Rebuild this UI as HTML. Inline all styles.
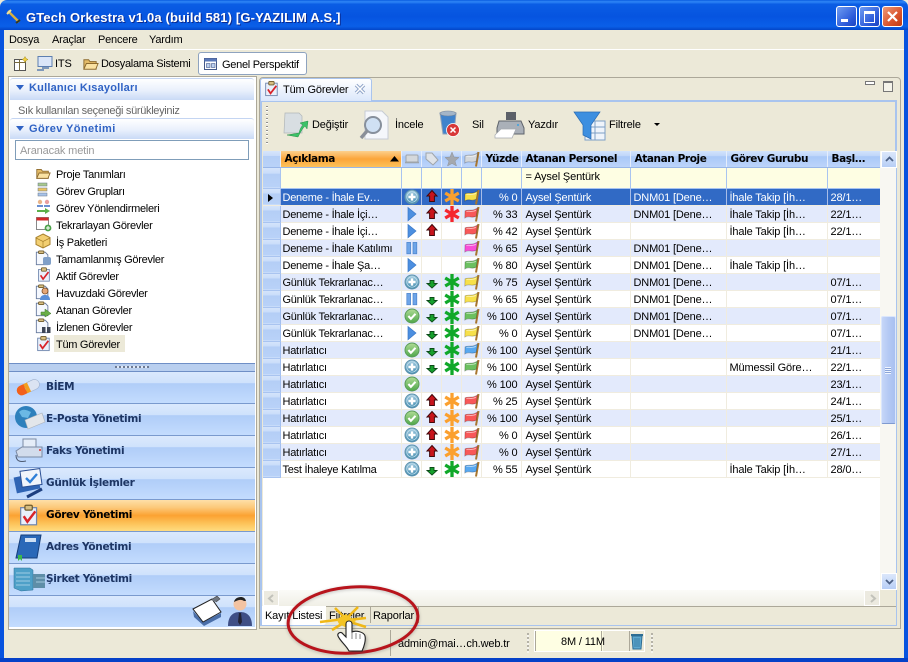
<!DOCTYPE html>
<html><head><meta charset="utf-8"><style>
html,body{margin:0;padding:0;width:908px;height:662px;overflow:hidden;background:#ece9d8}
body{position:relative;font:11px/13px "Liberation Sans","DejaVu Sans",sans-serif;color:#000;letter-spacing:-.15px}
.a,.t{position:absolute}
.t{white-space:nowrap}
.l{letter-spacing:-.28px;margin-top:1px}
svg{position:absolute;overflow:visible}
.h{background:linear-gradient(#fff,#e9f0fc 55%,#c9daf6);border-top:1px solid #c4d5f2;border-radius:3px 3px 0 0}
.hb{font:bold 11px/13px "Liberation Sans",sans-serif;color:#2f62c4;letter-spacing:.2px}
.btn{position:absolute;left:9px;width:246px;height:31px;border-bottom:1px solid #7a9ace;background:linear-gradient(#dbe9fd,#cfe2fc 35%,#b0cdf8 37%,#c3dcfe)}
.btn b{position:absolute;left:37px;top:8px;font:bold 10.5px/14px "DejaVu Sans",sans-serif;color:#1d3563;letter-spacing:-.3px}
table{position:absolute;left:263px;top:151px;width:617px;border-collapse:collapse;table-layout:fixed}
td{height:17px;box-sizing:border-box;padding:3px 0 0 3px;vertical-align:top;border-right:1px solid #f0ecdf;border-bottom:1px solid #f0ecdf;white-space:nowrap;overflow:hidden;position:relative;line-height:13px}
td:nth-child(2){padding-left:2px;letter-spacing:-.25px}
td:nth-child(8){padding-left:4px}
tr.e td{background:#e3eafc}
tr.o td{background:#fff}
td.r{background:linear-gradient(#d6e5fb,#c9dcfa 30%,#b4cef6 32%,#b9d2f8)!important;padding:0;border-right:1px solid #a3bfee;border-bottom:1px solid #a9c4f0}
td.n{text-align:right;padding-left:0;padding-right:3px}
td.i{padding:0}
td svg{left:2px;top:0}
tr.hd td{height:16px;padding:0 0 0 4px;vertical-align:middle;background:linear-gradient(#d2e3fc,#c0d6fa 30%,#a9c8f8 35%,#bcd4fa);border-right:1px solid #e4edfc;border-bottom:1px solid #98b6e8;font:bold 10.5px/14px "DejaVu Sans",sans-serif;letter-spacing:-.4px}
tr.hd td.i{padding:0}
tr.fl td{height:21px;padding-bottom:1px;padding-top:0;vertical-align:middle;background:#fefee3;border-right:1px solid #a9c4f0;border-bottom:1px solid #a9c4f0}
tr.s td{background:#316ac5;color:#fff;border-right:1px solid #a8bde8;border-bottom:1px solid #f0ecdf}
.mi{position:absolute;top:34px;letter-spacing:-.2px}
</style></head><body>
<svg width="0" height="0" style="position:absolute"><defs>
<linearGradient id="gp" x1="0" y1="0" x2="0" y2="1"><stop offset="0" stop-color="#a6cde2"/><stop offset="1" stop-color="#3f8aae"/></linearGradient>
<linearGradient id="gc" x1="0" y1="0" x2="0" y2="1"><stop offset="0" stop-color="#b0dc96"/><stop offset="1" stop-color="#4da64a"/></linearGradient>
<filter id="bl" x="-30%" y="-30%" width="160%" height="160%"><feGaussianBlur stdDeviation="1.5"/></filter>
<symbol id="p" viewBox="0 0 16 16"><circle cx="8" cy="8" r="7" fill="url(#gp)" stroke="#5f93ad"/><circle cx="8" cy="8" r="5.200" fill="none" stroke="#c8e2ee" stroke-width=".7"/><path d="M8 4.400v7.200M4.400 8h7.200" stroke="#fff" stroke-width="2.400"/></symbol>
<symbol id="c" viewBox="0 0 16 16"><circle cx="8" cy="8" r="7" fill="url(#gc)" stroke="#5a9c58"/><path d="M4.400 8l2.500 2.800 4.600-5" fill="none" stroke="#fff" stroke-width="2.100"/></symbol>
<symbol id="g" viewBox="0 0 16 16"><path d="M4 1.500l8 6.500-8 6.800z" fill="#4c8fe0" stroke="#3b78c6" stroke-width=".7"/></symbol>
<symbol id="z" viewBox="0 0 16 16"><rect x="2.800" y="2.400" width="3.800" height="11.400" fill="#6ea5e8" stroke="#4d84cc" stroke-width=".7"/><rect x="9" y="2.400" width="3.800" height="11.400" fill="#6ea5e8" stroke="#4d84cc" stroke-width=".7"/></symbol>
<symbol id="u" viewBox="0 0 16 16"><path d="M8 1.500l5 5.500H10.400v5.500H5.600V7H3z" fill="#c8141c" stroke="#42080a"/></symbol>
<symbol id="d" viewBox="0 0 16 16"><path d="M6 6.500h4v3h3L8 14 3 9.500h3z" fill="#16a02c" stroke="#0c4a18" stroke-width=".9"/></symbol>
<symbol id="so" viewBox="0 0 16 16"><path d="M8 0v16M1.200 4l13.600 8M14.800 4L1.200 12" stroke="#fba02e" stroke-width="3.300"/></symbol>
<symbol id="sr" viewBox="0 0 16 16"><path d="M8 0v16M1.200 4l13.600 8M14.800 4L1.200 12" stroke="#f5262c" stroke-width="3.300"/></symbol>
<symbol id="sg" viewBox="0 0 16 16"><path d="M8 0v16M1.200 4l13.600 8M14.800 4L1.200 12" stroke="#10a828" stroke-width="3.300"/></symbol>
<symbol id="f" viewBox="0 0 16 16"><path d="M14.500 1L12 15.500" stroke="#a8762e" stroke-width="2"/><path d="M1 5C4 2.800 8 6 13.500 2L12.300 10C8 13 5 9 .8 12z" fill="currentColor" stroke="#0004" stroke-width=".8"/><path d="M2.500 5.500C5 4.500 8 7 12 4.200" fill="none" stroke="#fff8" stroke-width="1"/></symbol>
<symbol id="clip" viewBox="0 0 18 18"><rect x="3" y="3" width="13" height="14" fill="#e9f0fb" stroke="#6f86ad"/><rect x="6.500" y="1" width="6" height="4" rx="1" fill="#d8bf82" stroke="#6e5a2c"/><path d="M5.500 10l3 4.500L15 6" fill="none" stroke="#d8242a" stroke-width="2"/></symbol>
<symbol id="doc" viewBox="0 0 18 18"><path d="M1.500 2.500h10l3 3v11h-13z" fill="#f5f8fe" stroke="#65789c"/><rect x="4" y="1" width="6" height="3" rx="1" fill="#d8bf82" stroke="#6e5a2c"/></symbol>
<symbol id="folder" viewBox="0 0 18 18"><path d="M2 15V5h5l1.500 2H15v8z" fill="#e3bb68" stroke="#8d6a2d"/><path d="M2 15l2.600-6H17l-2.400 6z" fill="#fae2a3" stroke="#8d6a2d"/></symbol>
</defs></svg>

<!-- window frame -->
<div class="a" style="left:0;top:0;width:908px;height:30px;background:linear-gradient(#0a5ce0 0,#2f86f6 6%,#0a5de4 14%,#0654e0 55%,#0a5fe8 88%,#0345c8);border-radius:7px 7px 0 0"></div>
<div class="a" style="left:0;top:30px;width:4px;height:632px;background:#0753df"></div>
<div class="a" style="right:0;top:30px;width:4px;height:632px;background:#0753df"></div>
<div class="a" style="left:0;top:658px;width:908px;height:4px;background:#0541c8"></div>
<svg style="left:5px;top:8px" width="18" height="18"><path d="M3 3l11 11" stroke="#d8b040" stroke-width="2.400"/><path d="M2 6l4-4" stroke="#f3e39c" stroke-width="2"/><path d="M11 15l4-3" stroke="#3a3a20" stroke-width="2"/></svg>
<div class="t" style="left:26px;top:10px;font:bold 13px/15px 'Liberation Sans',sans-serif;color:#fff;letter-spacing:.15px;text-shadow:1px 1px 0 #0a2a90">GTech Orkestra v1.0a (build 581) [G-YAZILIM A.S.]</div>
<div class="a" style="left:836px;top:6px;width:19px;height:19px;border:1px solid #fff;border-radius:3px;background:linear-gradient(135deg,#6f9cf2,#2a58d8 70%,#1c44c0)"><div class="a" style="left:4px;top:12px;width:7px;height:3px;background:#fff"></div></div>
<div class="a" style="left:859px;top:6px;width:19px;height:19px;border:1px solid #fff;border-radius:3px;background:linear-gradient(135deg,#6f9cf2,#2a58d8 70%,#1c44c0)"><div class="a" style="left:4px;top:4px;width:9px;height:8px;border:1px solid #fff;border-top-width:3px"></div></div>
<div class="a" style="left:882px;top:6px;width:19px;height:19px;border:1px solid #fff;border-radius:3px;background:linear-gradient(135deg,#ee9a78,#d9532c 60%,#bf3a14)"><svg style="left:3px;top:3px" width="13" height="13"><path d="M2 2l9 9M11 2l-9 9" stroke="#fff" stroke-width="2.200"/></svg></div>

<!-- menu -->
<div class="t mi" style="left:9px">Dosya</div><div class="t mi" style="left:52px">Araçlar</div><div class="t mi" style="left:98px">Pencere</div><div class="t mi" style="left:149px">Yardım</div>
<div class="a" style="left:4px;top:49px;width:900px;height:1px;background:#fff"></div>

<!-- toolbar -->
<svg style="left:13px;top:56px" width="16" height="16"><rect x="1.500" y="3.500" width="11" height="11" fill="#fff" stroke="#555"/><path d="M1.500 6.500h11M6.500 3.500v11" stroke="#7a6a3a"/><path d="M12 .5l1 2 2 1-2 1-1 2-1-2-2-1 2-1z" fill="#f3d23c" stroke="#a58a1c" stroke-width=".5"/></svg>
<svg style="left:36px;top:55px" width="17" height="17"><rect x="2" y="1.500" width="14" height="10" fill="#dbe6f8" stroke="#5d7fb0"/><path d="M6 13h7M1 15h7" stroke="#5d7fb0" stroke-width="1.600"/></svg>
<div class="t" style="left:55px;top:58px">ITS</div>
<svg style="left:82px;top:55px" width="17" height="17"><use href="#folder"/></svg>
<div class="t l" style="left:101px;top:57px">Dosyalama Sistemi</div>
<div class="a" style="left:198px;top:52px;width:107px;height:21px;border:1px solid #8ea3bf;border-radius:3px;background:#fff"></div>
<svg style="left:204px;top:57px" width="14" height="14"><rect x=".5" y="1.500" width="12" height="11" fill="#fff" stroke="#44598a"/><rect x=".5" y="1.500" width="12" height="3" fill="#5a78b8"/><rect x="2.500" y="6.500" width="3.500" height="4" fill="#bcd0ef" stroke="#44598a" stroke-width=".6"/><rect x="7.500" y="6.500" width="3.500" height="4" fill="#bcd0ef" stroke="#44598a" stroke-width=".6"/></svg>
<div class="t l" style="left:222px;top:58px">Genel Perspektif</div>

<!-- left panel -->
<div class="a" style="left:8px;top:76px;width:247px;height:552px;border:1px solid #aca899;background:#fff"></div>
<div class="a h" style="left:10px;top:78px;width:244px;height:21px"></div>
<svg style="left:15px;top:84px" width="11" height="8"><path d="M1 1h8L5 6z" fill="#2f62c4"/></svg>
<div class="t hb" style="left:29px;top:82px">Kullanıcı Kısayolları</div>
<div class="t l" style="left:18px;top:104px;color:#666;letter-spacing:-.32px">Sık kullanılan seçeneği sürükleyiniz</div>
<div class="a h" style="left:10px;top:118px;width:244px;height:20px"></div>
<svg style="left:15px;top:125px" width="11" height="8"><path d="M1 1h8L5 6z" fill="#2f62c4"/></svg>
<div class="t hb" style="left:29px;top:123px;letter-spacing:.4px">Görev Yönetimi</div>
<div class="a" style="left:15px;top:140px;width:232px;height:18px;border:1px solid #7f9db9;background:#fff"></div>
<div class="t" style="left:20px;top:145px;color:#999">Aranacak metin</div>

<svg style="left:35px;top:165px" width="16" height="16"><use href="#folder"/></svg>
<div class="t l" style="left:56px;top:168px">Proje Tanımları</div>
<svg style="left:38px;top:183px" width="12" height="15"><rect x="0" y="0" width="9" height="3" fill="#a8c88c" stroke="#678"  stroke-width=".5"/><rect x="0" y="5" width="9" height="3" fill="#ecc460" stroke="#678" stroke-width=".5"/><rect x="0" y="10" width="9" height="3" fill="#a9c4ea" stroke="#678" stroke-width=".5"/></svg>
<div class="t l" style="left:56px;top:185px">Görev Grupları</div>
<svg style="left:36px;top:199px" width="16" height="16"><circle cx="4" cy="3" r="2.200" fill="#e9b58a"/><circle cx="11" cy="3" r="2.200" fill="#e9a0a0"/><path d="M1 8h6V6H1zM8 8h6V6H8z" fill="#6a8fd0"/><path d="M1 11h8V9l5 3-5 3v-2H1z" fill="#5cb04a"/></svg>
<div class="t l" style="left:56px;top:202px">Görev Yönlendirmeleri</div>
<svg style="left:36px;top:216px" width="16" height="16"><rect x=".5" y="1.500" width="12" height="12" fill="#fff" stroke="#888"/><rect x=".5" y="1.500" width="12" height="3" fill="#d02828"/><circle cx="12" cy="12" r="3.400" fill="#4ca24a"/><path d="M12 10v4M10 12h4" stroke="#fff"/></svg>
<div class="t l" style="left:56px;top:219px">Tekrarlayan Görevler</div>
<svg style="left:35px;top:233px" width="16" height="16"><path d="M8 1l7 3.500v7L8 15 1 11.500v-7z" fill="#f2cf72" stroke="#a8812c"/><path d="M1 5l7 3.500L15 5M8 8.500V15" fill="none" stroke="#a8812c" stroke-width=".7"/></svg>
<div class="t l" style="left:56px;top:236px">İş Paketleri</div>
<svg style="left:35px;top:250px" width="16" height="16"><use href="#doc"/><rect x="8" y="7" width="8" height="8" rx="2" fill="#7f9fc8"/></svg>
<div class="t l" style="left:56px;top:253px">Tamamlanmış Görevler</div>
<svg style="left:36px;top:267px" width="15" height="15"><use href="#clip"/></svg>
<div class="t l" style="left:56px;top:270px">Aktif Görevler</div>
<svg style="left:35px;top:284px" width="16" height="16"><use href="#doc"/><circle cx="10" cy="7" r="3" fill="#e6a878" stroke="#7a4a20" stroke-width=".8"/><path d="M5 16c0-4 2.500-5 5-5s5 1 5 5z" fill="#5a8fd8"/></svg>
<div class="t l" style="left:56px;top:287px">Havuzdaki Görevler</div>
<svg style="left:35px;top:301px" width="16" height="16"><use href="#doc"/><path d="M6 11h4V8l6 4.500L10 16v-2H6z" fill="#6aae48" stroke="#3f7a2a" stroke-width=".5"/></svg>
<div class="t l" style="left:56px;top:304px">Atanan Görevler</div>
<svg style="left:35px;top:318px" width="16" height="16"><use href="#doc"/><rect x="7" y="9" width="3.500" height="6" fill="#3e4656"/><rect x="12" y="9" width="3.500" height="6" fill="#3e4656"/></svg>
<div class="t l" style="left:56px;top:321px">İzlenen Görevler</div>
<div class="a" style="left:54px;top:335px;width:71px;height:17px;background:#ece9d8"></div>
<svg style="left:35px;top:335px" width="16" height="17"><use href="#clip"/></svg>
<div class="t l" style="left:56px;top:338px">Tüm Görevler</div>

<div class="a" style="left:9px;top:363px;width:246px;height:9px;background:#b9cfef;border-top:1px solid #6f8fc6;border-bottom:1px solid #6f8fc6;box-sizing:border-box"></div>
<div class="a" style="left:115px;top:366px;width:34px;height:2px;background:repeating-linear-gradient(90deg,#6c7a94 0 2px,#dfe8f6 2px 4px)"></div>

<div class="btn" style="top:372px"><b>BİEM</b></div>
<svg style="left:15px;top:376px" width="28" height="22"><g transform="rotate(-25 14 11)"><rect x="1" y="6" width="13" height="10" rx="5" fill="#f2601a"/><rect x="10" y="6" width="15" height="10" rx="5" fill="#dbe3f2" stroke="#9fb0cc" stroke-width=".6"/><rect x="10" y="6" width="4" height="10" fill="#f2a020"/></g></svg>
<div class="btn" style="top:404px"><b>E-Posta Yönetimi</b></div>
<svg style="left:13px;top:404px" width="32" height="30"><circle cx="13" cy="13" r="11" fill="#2e80bc"/><path d="M6 8c4-4 8-2 12 0l-3 6-6-1z" fill="#6bb8e4"/><path d="M12 16l17-7 3 9-17 7z" fill="#e3e6ea" stroke="#aab0b8" stroke-width=".6"/></svg>
<div class="btn" style="top:436px"><b>Faks Yönetimi</b></div>
<svg style="left:14px;top:438px" width="30" height="26"><rect x="9" y="1" width="13" height="8" fill="#e5edf8" stroke="#7b8aa4"/><path d="M2 13l6-4h20v10H4z" fill="#d2dcec" stroke="#7b8aa4"/><path d="M2 17c0 7 5 7 10 6" fill="none" stroke="#4d5a70"/><circle cx="26" cy="12" r="1" fill="#d33"/></svg>
<div class="btn" style="top:468px"><b>Günlük İşlemler</b></div>
<svg style="left:14px;top:467px" width="30" height="32"><rect x="1" y="8" width="24" height="16" fill="#2f64b4" transform="rotate(-12 13 16)"/><rect x="7" y="3" width="20" height="16" fill="#f0f4fb" stroke="#2a4f94" transform="rotate(-8 16 11)"/><path d="M12 11l4 4 7-8" fill="none" stroke="#2f7fd8" stroke-width="2.400"/><path d="M13 30l15-8" stroke="#1d3f80" stroke-width="3"/></svg>
<div class="a" style="left:9px;top:500px;width:246px;height:31px;border-bottom:1px solid #7a9ace;background:linear-gradient(#fedfa8,#fcc878 25%,#fba232 50%,#fdc258 75%,#ffdc80)"></div>
<b class="t" style="left:46px;top:508px;font:bold 10.5px/14px 'DejaVu Sans',sans-serif;letter-spacing:-.3px">Görev Yönetimi</b>
<svg style="left:17px;top:504px" width="22" height="22"><use href="#clip"/></svg>
<div class="btn" style="top:532px"><b>Adres Yönetimi</b></div>
<svg style="left:14px;top:533px" width="30" height="28"><path d="M7 2h20l-4 23H2z" fill="#2a68b8" stroke="#163e7a"/><rect x="11" y="5" width="11" height="4" fill="#cfe0f4"/><path d="M4 22v6l2-2 2 2v-6z" fill="#3cb84a"/></svg>
<div class="btn" style="top:564px"><b>Şirket Yönetimi</b></div>
<svg style="left:13px;top:566px" width="32" height="26"><path d="M1 2h16l3 2v20L8 25 1 22z" fill="#4ea0c8" stroke="#2c7098" stroke-width=".5"/><path d="M20 8h12v14H20z" fill="#5e8ea8"/><path d="M3 7h14M3 11h14M3 15h14M3 19h14M23 12h9M23 16h9" stroke="#b8dcec" stroke-width=".8"/></svg>
<div class="btn" style="top:596px;border-bottom:0"></div>
<svg style="left:192px;top:594px" width="30" height="34"><path d="M1 17l10 11 18-9v4L12 32 2 23z" fill="#4a6ea8"/><path d="M1 15L20 5l9 13-18 10z" fill="#fff" stroke="#222"/><path d="M19 6l6-4 3 3-4 3" fill="#6f7680" stroke="#444" stroke-width=".6"/></svg>
<svg style="left:227px;top:595px" width="26" height="32"><circle cx="13" cy="9" r="6.500" fill="#f3c3a2"/><path d="M7 7c1-6 11-7 12-1l-2 0c-3-2-6-1-10 1z" fill="#222"/><path d="M1 31c0-10 5-14 12-14s12 4 12 14z" fill="#3f4f86"/><path d="M12 18h2l1 9-2 3-2-3z" fill="#223"/></svg>

<!-- right panel -->
<div class="a" style="left:259px;top:77px;width:640px;height:550px;border:1px solid #aca899;border-radius:4px 4px 0 0"></div>
<div class="a" style="left:260px;top:100px;width:637px;height:526px;border:2px solid #a9c4ee;box-sizing:border-box;background:#ece9d8"></div>
<div class="a" style="left:260px;top:78px;width:112px;height:23px;background:linear-gradient(#fff,#dbe7fb);border:1px solid #a9c4ee;border-bottom:0;border-radius:3px 3px 0 0;box-sizing:border-box"></div>
<svg style="left:263px;top:80px" width="16" height="17"><use href="#clip"/></svg>
<div class="t" style="left:283px;top:84px">Tüm Görevler</div>
<svg style="left:354px;top:83px" width="12" height="12"><path d="M2 2l8 8M10 2l-8 8" stroke="#8fa4c8" stroke-width="3.400"/><path d="M2 2l8 8M10 2l-8 8" stroke="#fff" stroke-width="1.500"/></svg>
<div class="a" style="left:865px;top:81px;width:8px;height:2px;border:1px solid #777;background:#fff"></div>
<div class="a" style="left:883px;top:81px;width:8px;height:8px;border:1px solid #777;border-top-width:2px;background:#f5f4ea"></div>

<!-- content toolbar -->
<div class="a" style="left:266px;top:106px;width:2px;height:38px;background:repeating-linear-gradient(#8f8f8f 0 1px,#fff 1px 2px,#ece9d8 2px 4px)"></div>
<svg style="left:283px;top:110px" width="26" height="30"><path d="M2 3h14l3 3v17H1z" fill="#d8dee2" stroke="#b0b6b8" stroke-width=".7"/><path d="M4 25l12-2c1-4 2-6 4-8l-3-2 8-2-1 8-2-3c-3 3-5 7-7 11z" fill="#3cc268" stroke="#2a9048" stroke-width=".5"/></svg>
<div class="t" style="left:312px;top:119px">Değiştir</div>
<svg style="left:360px;top:110px" width="30" height="32"><path d="M5 1h17l6 6v22H5z" fill="#f5f7fb" stroke="#c6cbd4"/><circle cx="13" cy="15" r="8" fill="#cfe0f3" stroke="#87909c" stroke-width="2"/><path d="M7 21l-6 7" stroke="#8a8f98" stroke-width="3.400"/></svg>
<div class="t" style="left:395px;top:119px">İncele</div>
<svg style="left:439px;top:110px" width="24" height="28"><path d="M1 3h16l-2 21H4z" fill="#3f83cc" stroke="#8ea2ba"/><ellipse cx="9" cy="3.500" rx="8" ry="2.500" fill="#a3b5c8" stroke="#75869a" stroke-width=".6"/><circle cx="14" cy="20" r="6.500" fill="#d83838" stroke="#fff" stroke-width=".8"/><path d="M11.500 17.500l5 5M16.500 17.500l-5 5" stroke="#fff" stroke-width="1.500"/></svg>
<div class="t" style="left:472px;top:119px">Sil</div>
<svg style="left:494px;top:111px" width="32" height="28"><path d="M12 1h10v8H12z" fill="#5c6068"/><path d="M5 10h22l3 7v6H3v-6z" fill="#aab0b8" stroke="#5e636b"/><path d="M7 18l-6 6v3h17l4-9z" fill="#fff" stroke="#a4a8ae" stroke-width=".7"/><circle cx="24" cy="14" r="1" fill="#3ba0e0"/></svg>
<div class="t" style="left:528px;top:119px">Yazdır</div>
<svg style="left:573px;top:110px" width="34" height="31"><rect x="12" y="11" width="20" height="19" fill="#eff4fb" stroke="#7d9fc6"/><path d="M12 17h20M12 23h20M22 11v19" stroke="#7d9fc6"/><path d="M1 2h26l-9 13v14l-8-4V15z" fill="#3d8fe0" stroke="#2a6cb4" stroke-width=".7"/></svg>
<div class="t" style="left:609px;top:119px">Filtrele</div>
<svg style="left:653px;top:122px" width="8" height="5"><path d="M1 1h6L4 4z" fill="#000"/></svg>

<!-- grid -->
<div class="a" style="left:263px;top:151px;width:633px;height:440px;background:#fff"></div>
<table>
<colgroup><col style="width:17px"><col style="width:121px"><col style="width:20px"><col style="width:20px"><col style="width:20px"><col style="width:20px"><col style="width:40px"><col style="width:109px"><col style="width:96px"><col style="width:101px"><col style="width:53px"></colgroup>
<tr class="hd"><td class="r"></td><td style="background:linear-gradient(#fdd08c,#fba53a 50%,#fdc25a);border-right-color:#e4edfc">Açıklama<svg style="left:109px;top:5px" width="9" height="6"><path d="M0 5.500L4.500 0 9 5.500z" fill="#000"/></svg></td>
<td class="i"><svg width="16" height="16" style="top:0;left:2px"><rect x="2" y="4" width="12" height="7" rx="1" fill="#d4d8dc" stroke="#9ea4aa"/><path d="M1 11.500h14" stroke="#9ea4aa" stroke-width="1.600"/></svg></td>
<td class="i"><svg width="16" height="16"><path d="M2 2h6l6 7-5 5-7-6z" fill="#dfe3e8" stroke="#9ea4aa"/></svg></td>
<td class="i"><svg width="16" height="16"><path d="M8 1l2 5 5 .5-4 3.500 1.500 5L8 12.500 3.500 15 5 10 1 6.500 6 6z" fill="#a4a8ae" stroke="#8e9298" stroke-width=".5"/></svg></td>
<td class="i"><svg width="16" height="16" style="color:#d4d8dc"><use href="#f"/></svg></td>
<td>Yüzde</td><td>Atanan Personel</td><td>Atanan Proje</td><td>Görev Gurubu</td><td>Başl…</td></tr>
<tr class="fl"><td class="r"></td><td></td><td></td><td></td><td></td><td></td><td></td><td>= Aysel Şentürk</td><td></td><td></td><td></td></tr>
<tr class="s"><td class="r"><svg width="6" height="8" style="left:5px;top:5px"><path d="M0 0l5 4-5 4z" fill="#000"/></svg></td><td>Deneme - İhale Ev…</td><td class="i"><svg width="16" height="16"><use href="#p"/></svg></td><td class="i"><svg width="16" height="16"><use href="#u"/></svg></td><td class="i"><svg width="16" height="16"><use href="#so"/></svg></td><td class="i"><svg width="16" height="16" style="color:#f7e04a"><use href="#f"/></svg></td><td class="n">% 0</td><td>Aysel Şentürk</td><td>DNM01 [Dene…</td><td>İhale Takip [İh…</td><td>28/1…</td></tr>
<tr class="e"><td class="r"></td><td>Deneme - İhale İçi…</td><td class="i"><svg width="16" height="16"><use href="#g"/></svg></td><td class="i"><svg width="16" height="16"><use href="#u"/></svg></td><td class="i"><svg width="16" height="16"><use href="#sr"/></svg></td><td class="i"><svg width="16" height="16" style="color:#f85858"><use href="#f"/></svg></td><td class="n">% 33</td><td>Aysel Şentürk</td><td>DNM01 [Dene…</td><td>İhale Takip [İh…</td><td>22/1…</td></tr>
<tr class="o"><td class="r"></td><td>Deneme - İhale İçi…</td><td class="i"><svg width="16" height="16"><use href="#g"/></svg></td><td class="i"><svg width="16" height="16"><use href="#u"/></svg></td><td></td><td class="i"><svg width="16" height="16" style="color:#f85858"><use href="#f"/></svg></td><td class="n">% 42</td><td>Aysel Şentürk</td><td></td><td>İhale Takip [İh…</td><td>22/1…</td></tr>
<tr class="e"><td class="r"></td><td>Deneme - İhale Katılımı</td><td class="i"><svg width="16" height="16"><use href="#z"/></svg></td><td></td><td></td><td class="i"><svg width="16" height="16" style="color:#f84ed8"><use href="#f"/></svg></td><td class="n">% 65</td><td>Aysel Şentürk</td><td>DNM01 [Dene…</td><td></td><td></td></tr>
<tr class="o"><td class="r"></td><td>Deneme - İhale Şa…</td><td class="i"><svg width="16" height="16"><use href="#g"/></svg></td><td></td><td></td><td class="i"><svg width="16" height="16" style="color:#6cc060"><use href="#f"/></svg></td><td class="n">% 80</td><td>Aysel Şentürk</td><td>DNM01 [Dene…</td><td>İhale Takip [İh…</td><td></td></tr>
<tr class="e"><td class="r"></td><td>Günlük Tekrarlanac…</td><td class="i"><svg width="16" height="16"><use href="#p"/></svg></td><td class="i"><svg width="16" height="16"><use href="#d"/></svg></td><td class="i"><svg width="16" height="16"><use href="#sg"/></svg></td><td class="i"><svg width="16" height="16" style="color:#f7e04a"><use href="#f"/></svg></td><td class="n">% 75</td><td>Aysel Şentürk</td><td>DNM01 [Dene…</td><td></td><td>07/1…</td></tr>
<tr class="o"><td class="r"></td><td>Günlük Tekrarlanac…</td><td class="i"><svg width="16" height="16"><use href="#z"/></svg></td><td class="i"><svg width="16" height="16"><use href="#d"/></svg></td><td class="i"><svg width="16" height="16"><use href="#sg"/></svg></td><td class="i"><svg width="16" height="16" style="color:#f7e04a"><use href="#f"/></svg></td><td class="n">% 65</td><td>Aysel Şentürk</td><td>DNM01 [Dene…</td><td></td><td>07/1…</td></tr>
<tr class="e"><td class="r"></td><td>Günlük Tekrarlanac…</td><td class="i"><svg width="16" height="16"><use href="#c"/></svg></td><td class="i"><svg width="16" height="16"><use href="#d"/></svg></td><td class="i"><svg width="16" height="16"><use href="#sg"/></svg></td><td class="i"><svg width="16" height="16" style="color:#6cc060"><use href="#f"/></svg></td><td class="n">% 100</td><td>Aysel Şentürk</td><td>DNM01 [Dene…</td><td></td><td>07/1…</td></tr>
<tr class="o"><td class="r"></td><td>Günlük Tekrarlanac…</td><td class="i"><svg width="16" height="16"><use href="#g"/></svg></td><td class="i"><svg width="16" height="16"><use href="#d"/></svg></td><td class="i"><svg width="16" height="16"><use href="#sg"/></svg></td><td class="i"><svg width="16" height="16" style="color:#f7e04a"><use href="#f"/></svg></td><td class="n">% 0</td><td>Aysel Şentürk</td><td>DNM01 [Dene…</td><td></td><td>07/1…</td></tr>
<tr class="e"><td class="r"></td><td>Hatırlatıcı</td><td class="i"><svg width="16" height="16"><use href="#c"/></svg></td><td class="i"><svg width="16" height="16"><use href="#d"/></svg></td><td class="i"><svg width="16" height="16"><use href="#sg"/></svg></td><td class="i"><svg width="16" height="16" style="color:#58a8f0"><use href="#f"/></svg></td><td class="n">% 100</td><td>Aysel Şentürk</td><td></td><td></td><td>21/1…</td></tr>
<tr class="o"><td class="r"></td><td>Hatırlatıcı</td><td class="i"><svg width="16" height="16"><use href="#p"/></svg></td><td class="i"><svg width="16" height="16"><use href="#d"/></svg></td><td class="i"><svg width="16" height="16"><use href="#sg"/></svg></td><td class="i"><svg width="16" height="16" style="color:#6cc060"><use href="#f"/></svg></td><td class="n">% 100</td><td>Aysel Şentürk</td><td></td><td>Mümessil Göre…</td><td>22/1…</td></tr>
<tr class="e"><td class="r"></td><td>Hatırlatıcı</td><td class="i"><svg width="16" height="16"><use href="#c"/></svg></td><td></td><td></td><td></td><td class="n">% 100</td><td>Aysel Şentürk</td><td></td><td></td><td>23/1…</td></tr>
<tr class="o"><td class="r"></td><td>Hatırlatıcı</td><td class="i"><svg width="16" height="16"><use href="#p"/></svg></td><td class="i"><svg width="16" height="16"><use href="#u"/></svg></td><td class="i"><svg width="16" height="16"><use href="#so"/></svg></td><td class="i"><svg width="16" height="16" style="color:#f85858"><use href="#f"/></svg></td><td class="n">% 25</td><td>Aysel Şentürk</td><td></td><td></td><td>24/1…</td></tr>
<tr class="e"><td class="r"></td><td>Hatırlatıcı</td><td class="i"><svg width="16" height="16"><use href="#c"/></svg></td><td class="i"><svg width="16" height="16"><use href="#u"/></svg></td><td class="i"><svg width="16" height="16"><use href="#so"/></svg></td><td class="i"><svg width="16" height="16" style="color:#f85858"><use href="#f"/></svg></td><td class="n">% 100</td><td>Aysel Şentürk</td><td></td><td></td><td>25/1…</td></tr>
<tr class="o"><td class="r"></td><td>Hatırlatıcı</td><td class="i"><svg width="16" height="16"><use href="#p"/></svg></td><td class="i"><svg width="16" height="16"><use href="#u"/></svg></td><td class="i"><svg width="16" height="16"><use href="#so"/></svg></td><td class="i"><svg width="16" height="16" style="color:#f85858"><use href="#f"/></svg></td><td class="n">% 0</td><td>Aysel Şentürk</td><td></td><td></td><td>26/1…</td></tr>
<tr class="e"><td class="r"></td><td>Hatırlatıcı</td><td class="i"><svg width="16" height="16"><use href="#p"/></svg></td><td class="i"><svg width="16" height="16"><use href="#u"/></svg></td><td class="i"><svg width="16" height="16"><use href="#so"/></svg></td><td class="i"><svg width="16" height="16" style="color:#f85858"><use href="#f"/></svg></td><td class="n">% 0</td><td>Aysel Şentürk</td><td></td><td></td><td>27/1…</td></tr>
<tr class="o"><td class="r"></td><td>Test İhaleye Katılma</td><td class="i"><svg width="16" height="16"><use href="#p"/></svg></td><td class="i"><svg width="16" height="16"><use href="#d"/></svg></td><td class="i"><svg width="16" height="16"><use href="#sg"/></svg></td><td class="i"><svg width="16" height="16" style="color:#58a8f0"><use href="#f"/></svg></td><td class="n">% 55</td><td>Aysel Şentürk</td><td></td><td>İhale Takip [İh…</td><td>28/0…</td></tr>
</table>

<!-- vertical scrollbar -->
<div class="a" style="left:880px;top:151px;width:16px;height:439px;background:#f8f7f2"></div>
<div class="a" style="left:881px;top:151px;width:14px;height:15px;background:linear-gradient(#dbe7fb,#b7cef5);border:1px solid #fff;box-sizing:content-box"><svg style="left:3px;top:4px" width="9" height="7"><path d="M1 5l3.500-3.500L8 5" fill="none" stroke="#4d6185" stroke-width="1.800"/></svg></div>
<div class="a" style="left:881px;top:316px;width:15px;height:108px;background:linear-gradient(90deg,#c6d6f8,#b4c9f4 50%,#a9c0f0);border:1px solid #dbe6fc;border-bottom:1px solid #7f9ad0;box-sizing:border-box;border-radius:2px"></div>
<div class="a" style="left:885px;top:367px;width:6px;height:7px;background:repeating-linear-gradient(#f0f5ff 0 1px,#8aa4d8 1px 2px)"></div>
<div class="a" style="left:881px;top:573px;width:14px;height:15px;background:linear-gradient(#dbe7fb,#b7cef5);border:1px solid #fff"><svg style="left:3px;top:4px" width="9" height="7"><path d="M1 2l3.500 3.500L8 2" fill="none" stroke="#4d6185" stroke-width="1.800"/></svg></div>

<!-- horizontal scrollbar -->
<div class="a" style="left:262px;top:590px;width:634px;height:16px;background:linear-gradient(#fbfbf8,#f0efe6)"></div>
<div class="a" style="left:880px;top:590px;width:16px;height:16px;background:#ece9d8"></div>
<div class="a" style="left:263px;top:590px;width:14px;height:14px;background:#eceae0;border:1px solid #fff"><svg style="left:3px;top:3px" width="8" height="9"><path d="M6 1L2 4.500 6 8" fill="none" stroke="#c2c2ba" stroke-width="2"/></svg></div>
<div class="a" style="left:864px;top:590px;width:14px;height:14px;background:#eceae0;border:1px solid #fff"><svg style="left:4px;top:3px" width="8" height="9"><path d="M2 1l4 3.500L2 8" fill="none" stroke="#c2c2ba" stroke-width="2"/></svg></div>

<!-- bottom tabs -->
<div class="a" style="left:262px;top:606px;width:634px;height:19px;background:#ece9d8;border-top:1px solid #aca899;box-sizing:border-box"></div>
<div class="a" style="left:262px;top:606px;width:64px;height:19px;background:#fff;border-radius:0 0 3px 0"></div>
<div class="a" style="left:370px;top:607px;width:1px;height:16px;background:#aca899"></div>
<div class="a" style="left:418px;top:607px;width:1px;height:16px;background:#aca899"></div>
<div class="t" style="left:265px;top:610px">Kayıt Listesi</div>
<div class="t" style="left:329px;top:610px">Filtreler</div>
<div class="t" style="left:373px;top:610px">Raporlar</div>

<!-- status bar -->
<div class="a" style="left:390px;top:630px;width:1px;height:26px;background:#aca899"></div>
<div class="t" style="left:398px;top:638px">admin@mai…ch.web.tr</div>
<div class="a" style="left:527px;top:633px;width:2px;height:20px;background:repeating-linear-gradient(#b5b2a6 0 2px,#f5f4ee 2px 4px)"></div>
<div class="a" style="left:534px;top:630px;width:111px;height:22px;background:#ece9d8;border:1px solid #fff;box-sizing:border-box"></div>
<div class="a" style="left:535px;top:631px;width:67px;height:20px;background:#fefee3;border-left:1px solid #aca899"></div>
<div class="a" style="left:601px;top:631px;width:1px;height:20px;background:#aca899"></div>
<div class="a" style="left:629px;top:631px;width:1px;height:20px;background:#aca899"></div>
<div class="t" style="left:561px;top:636px">8M / 11M</div>
<svg style="left:630px;top:632px" width="14" height="19"><path d="M2 4h10l-1 13H3z" fill="#5da8d0" stroke="#2d6d94"/><path d="M1 3h12" stroke="#2d6d94" stroke-width="2"/><path d="M5 6v9M7 6v9M9 6v9" stroke="#2d6d94" stroke-width=".7"/></svg>
<div class="a" style="left:651px;top:633px;width:2px;height:20px;background:repeating-linear-gradient(#b5b2a6 0 2px,#f5f4ee 2px 4px)"></div>

<!-- annotation overlay -->
<svg style="left:0;top:0" width="908" height="662">
<ellipse cx="353" cy="621" rx="65" ry="33" fill="none" stroke="#555" stroke-width="3" opacity=".35" filter="url(#bl)" transform="rotate(-4 353 620)"/>
<ellipse cx="353" cy="620" rx="65" ry="33" fill="none" stroke="#b8141c" stroke-width="3" transform="rotate(-4 353 620)"/>
<path d="M335 608l10 10M358 607l-11 11M320 622l24-3M366 618l-18 2M332 630l13-8M366 627l-19-6" stroke="#f0b818" stroke-width="2.600"/>
<path d="M340 617l6-3 5 4 5 3-5 3-6 3-6-3-2-4z" fill="#f4c424"/>
<path d="M351 653c-3-6-9-10-11-15-1-3 3-5 5-2l3 3v-13c0-4 6-4 6 0v8c4-2 12 0 13 4s-1 11-3 15z" fill="#555" opacity=".4" filter="url(#bl)"/>
<path d="M349 651c-3-6-9-10-11-15-1-3 3-5 5-2l3 3v-13c0-4 6-4 6 0v8c4-2 12 0 13 4s-1 11-3 15z" fill="#fff" stroke="#222" stroke-width="1.100"/>
<path d="M352 632v7M356 633v6M360 634v5" stroke="#555" stroke-width=".7"/>
</svg>
</body></html>
